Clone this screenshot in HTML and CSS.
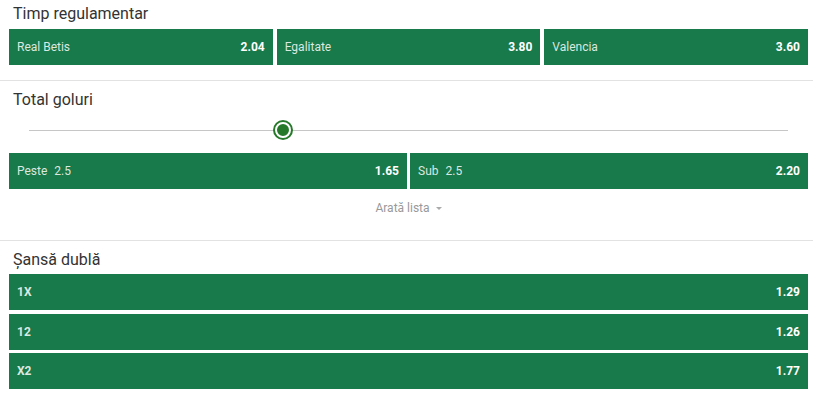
FILE: index.html
```
<!DOCTYPE html>
<html lang="ro">
<head>
    <meta charset="UTF-8">
    <meta name="viewport" content="width=device-width, initial-scale=1.0">
    <title>Cote meci</title>
    <link rel="stylesheet" href="styles.css">
</head>
<body>

    <!-- Timp regulamentar -->
    <section class="market market-first">
        <h2 class="market-title">Timp regulamentar</h2>
        <div class="odds-row cols-3">
            <a href="#" class="odd-btn"><span class="odd-label">Real Betis</span><span class="odd-value">2.04</span></a>
            <a href="#" class="odd-btn"><span class="odd-label">Egalitate</span><span class="odd-value">3.80</span></a>
            <a href="#" class="odd-btn"><span class="odd-label">Valencia</span><span class="odd-value">3.60</span></a>
        </div>
    </section>

    <!-- Total goluri -->
    <section class="market">
        <h2 class="market-title">Total goluri</h2>
        <div class="slider">
            <div class="slider-track">
                <span class="slider-thumb"></span>
            </div>
        </div>
        <div class="odds-row cols-2">
            <a href="#" class="odd-btn"><span class="odd-label">Peste <span class="line">2.5</span></span><span class="odd-value">1.65</span></a>
            <a href="#" class="odd-btn"><span class="odd-label">Sub <span class="line">2.5</span></span><span class="odd-value">2.20</span></a>
        </div>
        <a href="#" class="show-list">Arată lista <span class="caret"></span></a>
    </section>

    <!-- Sansa dubla -->
    <section class="market market-last">
        <h2 class="market-title">Șansă dublă</h2>
        <div class="odds-list">
            <a href="#" class="odd-btn"><span class="odd-label strong">1X</span><span class="odd-value">1.29</span></a>
            <a href="#" class="odd-btn"><span class="odd-label strong">12</span><span class="odd-value">1.26</span></a>
            <a href="#" class="odd-btn"><span class="odd-label strong">X2</span><span class="odd-value">1.77</span></a>
        </div>
    </section>

</body>
</html>
```

FILE: styles.css
```
/* General */
body {
    font-family: Roboto, 'Liberation Sans', sans-serif;
    margin: 0;
    padding: 0;
    background-color: #fff;
    color: #333;
}

a {
    text-decoration: none;
}

/* Market blocks */
.market {
    padding: 9px 5px 0 9px;
    border-bottom: 1px solid #e2e2e2;
}

.market-first {
    padding-top: 4px;
    padding-bottom: 15px;
}

.market-last {
    border-bottom: none;
}

.market-title {
    margin: 0 0 0 4px;
    font-size: 16px;
    font-weight: 400;
    line-height: 20px;
    color: #333;
}

.market-last .market-title {
    margin-bottom: 4px;
}

.market-first .market-title {
    margin-bottom: 5px;
}

/* Odds buttons */
.odds-row {
    display: grid;
    gap: 4px;
}

.cols-3 {
    grid-template-columns: repeat(3, 1fr);
}

.cols-2 {
    grid-template-columns: repeat(2, 1fr);
    gap: 3px;
}

.odds-list {
    display: flex;
    flex-direction: column;
    gap: 3.5px;
}

.odd-btn {
    display: flex;
    align-items: center;
    justify-content: space-between;
    height: 36px;
    padding: 0 8px;
    background-color: #187a4a;
    font-size: 12px;
    box-sizing: border-box;
}

.odd-label {
    color: rgba(255, 255, 255, 0.85);
}

.odd-label .line {
    margin-left: 4px;
}

.odd-label.strong {
    font-weight: 700;
}

.odd-value {
    color: #fff;
    font-weight: 700;
}

/* Slider */
.slider {
    height: 40px;
    display: flex;
    align-items: center;
    padding: 0 20px;
    margin-bottom: 3px;
}

.slider-track {
    position: relative;
    flex: 1;
    height: 1px;
    background-color: #c6c6c6;
}

.slider-thumb {
    position: absolute;
    left: 246px;
    top: -8px;
    width: 12px;
    height: 12px;
    border-radius: 50%;
    background-color: #27792a;
    border: 2px solid #fff;
    box-shadow: 0 0 0 2px #27792a;
}

/* Show list link */
.show-list {
    display: block;
    margin: 11px 0 0;
    padding-bottom: 24px;
    text-align: center;
    font-size: 12px;
    line-height: 16px;
    color: #999;
}

.caret {
    display: inline-block;
    width: 0;
    height: 0;
    margin-left: 3px;
    vertical-align: middle;
    border-left: 3px solid transparent;
    border-right: 3px solid transparent;
    border-top: 3px solid #aaa;
}
```
